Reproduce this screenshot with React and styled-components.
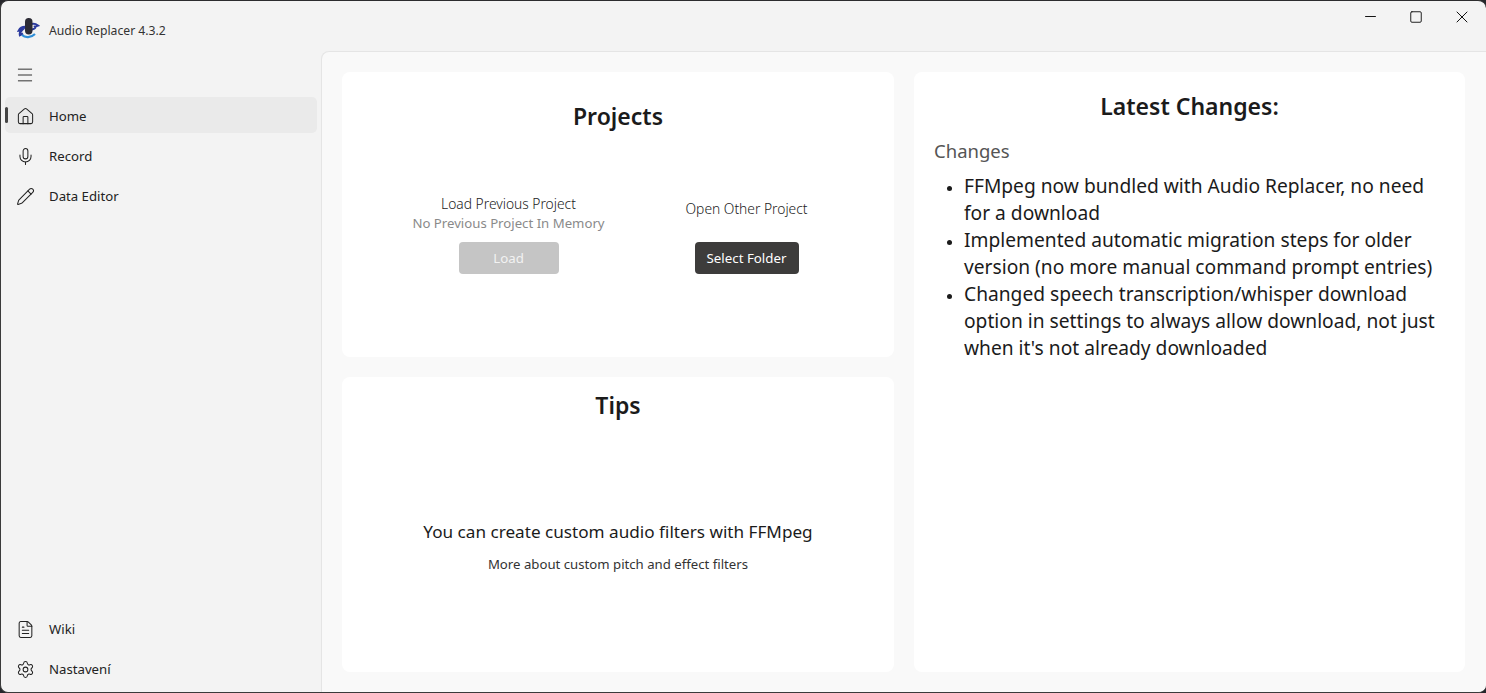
import styled, { createGlobalStyle } from 'styled-components'
import { Home, Mic, Pencil, FileText, Settings, Menu, Minus, Square, X } from 'lucide-react'

const GlobalStyle = createGlobalStyle`
html, body {
	margin: 0;
	padding: 0;
	background: #26272b;
}
* {
	box-sizing: border-box;
}
`

const Window = styled.div`
width: 1486px;
height: 693px;
display: flex;
flex-direction: column;
background: #f3f3f3;
border-top: 1px solid #2c2c2e;
border-left: 1px solid #3a3a3a;
border-bottom: 1px solid #3a3a3a;
border-radius: 8px;
overflow: hidden;
font-family: "Noto Sans", "Open Sans", sans-serif;
color: #1b1b1b;
`

const TitleBar = styled.div`
height: 50px;
flex: none;
display: flex;
padding-left: 15px;
`

const Brand = styled.div`
display: flex;
align-items: center;
height: 22px;
margin-top: 17px;
`

const AppTitle = styled.span`
margin: 3px 0 0 9px;
font-size: 12.2px;
color: #333;
`

const WindowButtons = styled.div`
margin-left: auto;
margin-right: 1px;
display: flex;
`

const WindowButton = styled.div`
width: 46px;
height: 31px;
display: flex;
align-items: center;
justify-content: center;
color: #111;
`

const Body = styled.div`
flex: 1;
display: flex;
min-height: 0;
`

const Sidebar = styled.nav`
width: 320px;
flex: none;
display: flex;
flex-direction: column;
padding: 4px 4px 2px 4px;
`

const MenuButton = styled.div`
height: 40px;
display: flex;
align-items: center;
padding-left: 10px;
margin-bottom: 2px;
color: #333;
`

const NavItem = styled.div`
position: relative;
height: 36px;
margin-bottom: 4px;
padding: 2px 0 0 11px;
display: flex;
align-items: center;
gap: 14px;
font-size: 13.2px;
color: #222;
border-radius: 5px;
background: ${(p) => (p.$active ? '#eaeaea' : 'transparent')};
`

const ActiveMark = styled.span`
position: absolute;
left: 0;
top: 10px;
width: 3px;
height: 16px;
border-radius: 2px;
background: #444;
`

const Spacer = styled.div`
flex: 1;
`

const Content = styled.main`
flex: 1;
display: grid;
grid-template-columns: 552px 551px;
grid-template-rows: 285px 295px;
gap: 20px;
align-content: start;
padding: 20px;
background: #f9f9f9;
border-top: 1px solid #e5e5e5;
border-left: 1px solid #e5e5e5;
border-top-left-radius: 8px;
`

const Card = styled.section`
background: #fff;
border-radius: 8px;
display: flex;
flex-direction: column;
align-items: center;
min-height: 0;
`

const ChangesCard = styled(Card)`
grid-column: 2;
grid-row: 1 / 3;
align-items: stretch;
padding: 17px 20px;
`

const CardTitle = styled.h2`
margin: 0;
font-size: 23px;
line-height: 34px;
font-weight: 600;
text-align: center;
color: #1b1b1b;
`

const ProjectsTitle = styled(CardTitle)`
margin-top: 27px;
`

const TipsTitle = styled(CardTitle)`
margin-top: 11px;
`

const ProjectColumns = styled.div`
width: 100%;
margin-top: 60px;
display: grid;
grid-template-columns: 333px 143px;
justify-content: start;
`

const ProjectOption = styled.div`
display: flex;
flex-direction: column;
align-items: center;
`

const OptionLabels = styled.div`
height: 49px;
padding-top: ${(p) => p.$top}px;
display: flex;
flex-direction: column;
align-items: center;
`

const OptionLabel = styled.div`
font-size: 13.8px;
line-height: 20px;
font-weight: 300;
color: #222;
`

const OptionHint = styled.div`
font-size: 13.2px;
line-height: 19px;
color: #8a8a8a;
`

const ActionButton = styled.button`
height: 32px;
width: ${(p) => p.$width}px;
border: none;
border-radius: 4px;
font-family: inherit;
font-size: 13.3px;
background: ${(p) => (p.disabled ? '#c5c5c5' : '#3d3c3b')};
color: ${(p) => (p.disabled ? '#f2f2f2' : '#fff')};
`

const TipBody = styled.div`
margin-top: 98px;
display: flex;
flex-direction: column;
align-items: center;
gap: 10px;
`

const TipHeadline = styled.div`
font-size: 17.15px;
line-height: 24px;
color: #1b1b1b;
`

const TipLink = styled.div`
font-size: 13.2px;
line-height: 20px;
color: #333;
`

const ChangesHeading = styled.div`
margin-top: 14px;
font-size: 18.5px;
line-height: 28px;
color: #555;
`

const ChangesList = styled.ul`
margin: 7px 0 0;
padding-left: 30px;
font-size: 19.2px;
line-height: 27px;
color: #1b1b1b;

li::marker {
	font-size: 15px;
}
`

const changes = [
	'FFMpeg now bundled with Audio Replacer, no need for a download',
	'Implemented automatic migration steps for older version (no more manual command prompt entries)',
	"Changed speech transcription/whisper download option in settings to always allow download, not just when it's not already downloaded",
]

const Logo = () => (
	<svg width="24" height="22" viewBox="0 0 24 22" fill="none">
		<path d="M9 9C6 9 4 10.500 3 12.500L6 12C4.500 13.500 3.500 15 4 17L7 15.500" stroke="#2b3a9e" strokeWidth="2.4" />
		<path d="M16 6C18 5.500 20 6 22 7.500L19 8.500C20 9.500 19 11 16 11.500" stroke="#2b3a9e" strokeWidth="2" />
		<path d="M6 17C9 20 15 20 19 16" stroke="#2f8fd8" strokeWidth="2.2" />
		<rect x="9" y="0" width="7.500" height="16.500" rx="3.700" fill="#2c2b35" />
	</svg>
)

const App = () => {
	return (
		<>
			<GlobalStyle />
			<Window>
				<TitleBar>
					<Brand>
						<Logo />
						<AppTitle>Audio Replacer 4.3.2</AppTitle>
					</Brand>
					<WindowButtons>
						<WindowButton><Minus size={17} strokeWidth={1.4} /></WindowButton>
						<WindowButton><Square size={14} strokeWidth={1.6} /></WindowButton>
						<WindowButton><X size={20} strokeWidth={1.2} /></WindowButton>
					</WindowButtons>
				</TitleBar>
				<Body>
					<Sidebar>
						<MenuButton><Menu size={20} strokeWidth={1.2} /></MenuButton>
						<NavItem $active>
							<ActiveMark />
							<Home size={19} strokeWidth={1.3} />
							Home
						</NavItem>
						<NavItem><Mic size={19} strokeWidth={1.3} />Record</NavItem>
						<NavItem><Pencil size={19} strokeWidth={1.3} />Data Editor</NavItem>
						<Spacer />
						<NavItem><FileText size={19} strokeWidth={1.3} />Wiki</NavItem>
						<NavItem><Settings size={19} strokeWidth={1.3} />Nastavení</NavItem>
					</Sidebar>
					<Content>
						<Card>
							<ProjectsTitle>Projects</ProjectsTitle>
							<ProjectColumns>
								<ProjectOption>
									<OptionLabels $top={1}>
										<OptionLabel>Load Previous Project</OptionLabel>
										<OptionHint>No Previous Project In Memory</OptionHint>
									</OptionLabels>
									<ActionButton disabled $width={100}>Load</ActionButton>
								</ProjectOption>
								<ProjectOption>
									<OptionLabels $top={6}>
										<OptionLabel>Open Other Project</OptionLabel>
									</OptionLabels>
									<ActionButton $width={104}>Select Folder</ActionButton>
								</ProjectOption>
							</ProjectColumns>
						</Card>
						<ChangesCard>
							<CardTitle>Latest Changes:</CardTitle>
							<ChangesHeading>Changes</ChangesHeading>
							<ChangesList>
								{changes.map((text) => <li key={text}>{text}</li>)}
							</ChangesList>
						</ChangesCard>
						<Card>
							<TipsTitle>Tips</TipsTitle>
							<TipBody>
								<TipHeadline>You can create custom audio filters with FFMpeg</TipHeadline>
								<TipLink>More about custom pitch and effect filters</TipLink>
							</TipBody>
						</Card>
					</Content>
				</Body>
			</Window>
		</>
	)
}

export default App
